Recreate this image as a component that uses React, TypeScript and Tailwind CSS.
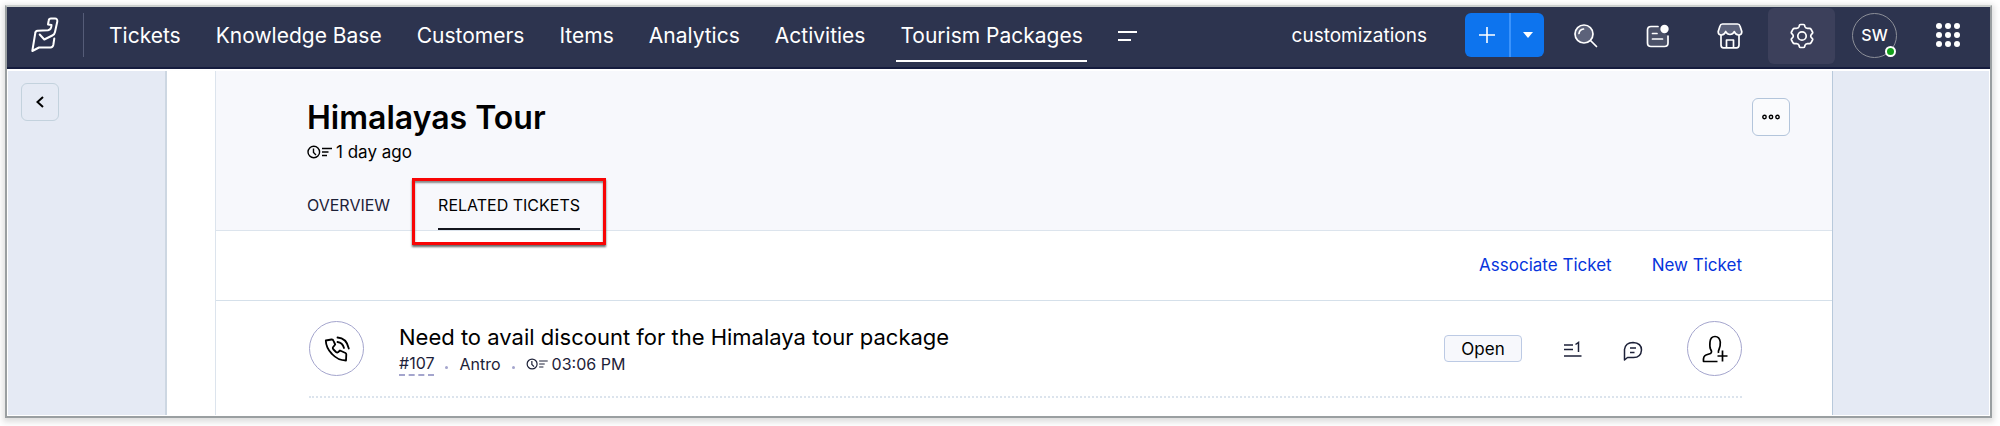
import type { ReactNode } from 'react'

interface IconProps {
  className?: string
}

const NAV_ITEMS = ['Tickets', 'Knowledge Base', 'Customers', 'Items', 'Analytics', 'Activities', 'Tourism Packages']
const ACTIVE_ITEM = 'Tourism Packages'

function Logo() {
  return (
    <svg width="28" height="36" viewBox="0 0 28 36" fill="none" stroke="#fff" strokeWidth="2" strokeLinejoin="round" strokeLinecap="round">
      <path d="M8.700 17.500 13.300 22.500 21.300 18.500Q23.600 17.500 24 15L26.300 4.500Q26.500 1.500 24 1.500H20Q18 1.500 17.700 3.500L17 7.500 20.500 8Q20.500 12.500 17 13.300L6.500 13.800Q4.500 14 4.300 16L1.300 34 8 30.500H19.500Q21.800 30.300 22.300 28L23.300 21.500" />
    </svg>
  )
}

function MenuIcon() {
  return (
    <svg width="19" height="12" viewBox="0 0 19 12" fill="#fff">
      <rect x="0" y="1" width="19" height="2" />
      <rect x="0" y="9" width="13" height="2" />
    </svg>
  )
}

function SearchIcon() {
  return (
    <svg width="24" height="24" viewBox="0 0 24 24" fill="none" stroke="#fff" strokeWidth="1.700" strokeLinecap="round">
      <circle cx="10" cy="10" r="9" fill="#5c627a" />
      <path d="M16.500 16.500 22.500 22.500M5 9.500Q5.500 5.500 9.500 5" />
    </svg>
  )
}

function NotesIcon() {
  return (
    <svg width="24" height="24" viewBox="0 0 24 24" fill="none" stroke="#fff" strokeWidth="1.700" strokeLinecap="round">
      <path d="M12 2.500H5Q1.500 2.500 1.500 6V19Q1.500 22.500 5 22.500H18.500Q22 22.500 22 19V12" fill="#4b5168" />
      <path d="M6.500 9.500H11M6.500 15H16.500" />
      <circle cx="18.500" cy="5" r="4.200" fill="#fff" stroke="none" />
    </svg>
  )
}

function StoreIcon() {
  return (
    <svg width="26" height="26" viewBox="0 0 26 26" fill="none" stroke="#fff" strokeWidth="1.700" strokeLinejoin="round">
      <path d="M5.500 1H20.500Q22.500 1 23 3L24.800 8.500Q25 12 21.500 12 18.500 12 17.300 8.500 16 11.500 13 11.500 10 11.500 8.700 8.500 7.500 12 4.500 12 1 12 1.200 8.500L3 3Q3.500 1 5.500 1Z" fill="#5c627a" />
      <path d="M4 12V22Q4 24.800 6.500 24.800H19.500Q22 24.800 22 22V12M9.500 24.500V17H16.500V24.500" />
    </svg>
  )
}

function GearIcon() {
  return (
    <svg width="24" height="26" viewBox="0 0 24 26" fill="none" stroke="#fff" strokeWidth="1.700" strokeLinejoin="round">
      <path d="M10.500 1.500H13.500Q14.500 1.500 14.700 2.500L15 3.700Q15.500 5.200 17.500 5.400H19.500Q20.500 5.400 21 6.200L22.500 9Q23 10 22.200 10.700L21.200 11.700Q20.300 13 21.200 14.300L22.200 15.300Q23 16 22.500 17L21 19.800Q20.500 20.600 19.500 20.600H17.500Q15.500 20.800 15 22.300L14.700 23.500Q14.500 24.500 13.500 24.500H10.500Q9.500 24.500 9.300 23.500L9 22.300Q8.500 20.800 6.500 20.600H4.500Q3.500 20.600 3 19.800L1.500 17Q1 16 1.800 15.300L2.800 14.300Q3.700 13 2.800 11.700L1.800 10.700Q1 10 1.500 9L3 6.200Q3.500 5.400 4.500 5.400H6.500Q8.500 5.200 9 3.700L9.300 2.500Q9.500 1.500 10.500 1.500Z" />
      <circle cx="12" cy="13" r="4.200" />
    </svg>
  )
}

function AppsIcon() {
  const steps = [3, 12, 21]
  return (
    <svg width="24" height="24" viewBox="0 0 24 24" fill="#fff">
      {steps.map((y) => steps.map((x) => <circle key={`${x}-${y}`} cx={x} cy={y} r="3" />))}
    </svg>
  )
}

function ClockLinesIcon({ className }: IconProps) {
  return (
    <svg className={className} viewBox="0 0 25 14" fill="none" stroke="currentColor" strokeWidth="1.400">
      <circle cx="6.800" cy="7" r="5.800" />
      <path d="M6.500 3.500V7.500L9 10M15 3.500H25M15 7H21.500M15 10.500H20" />
    </svg>
  )
}

function PhoneIcon() {
  return (
    <svg width="26" height="26" viewBox="0 0 26 26" fill="none" stroke="#000" strokeWidth="1.800" strokeLinejoin="round" strokeLinecap="round">
      <path d="M1.800 4.500 7.500 3.500Q9 3.300 9.500 4.800L11.200 8.500 8.800 11.500Q8.500 12.500 9.500 13.500L12 16Q13.200 17 14 16.200L16 14.500 21.500 17Q22.300 17.500 22.300 18.500L22 24.500Q14 24.500 8 18 2 12 1.800 4.500Z" />
      <path d="M13.500 1.500Q22.500 2 24.800 12.500M13.500 6Q18.500 6.500 20 12" />
    </svg>
  )
}

function PriorityIcon() {
  return (
    <svg width="18" height="16" viewBox="0 0 18 16" fill="none" stroke="#1d2138" strokeWidth="1.500">
      <path d="M0 4H9M0 8.500H9M0 15H17.500M11.500 3.500 14.500 1.500V11" />
    </svg>
  )
}

function ChatIcon() {
  return (
    <svg width="20" height="20" viewBox="0 0 20 20" fill="none" stroke="#1d2138" strokeWidth="1.500" strokeLinejoin="round">
      <path d="M1.500 19V8.500Q2.500 1.500 10 1.500 18.500 2 18.500 9 18 16.500 10.500 16.500H4.500Z" />
      <path d="M7 7H13M7 11.500H11.500" />
    </svg>
  )
}

function AssignIcon() {
  return (
    <svg width="26" height="28" viewBox="0 0 26 28" fill="none" stroke="#000" strokeWidth="1.700" strokeLinejoin="round">
      <path d="M15.500 26.500H1.500Q1 21 4 20L8.500 18.500Q10.500 17 8.500 14 7.500 12 8 7 8.500 1.500 13 1.500 17.500 1.500 18.300 7 18.500 11.500 17 14.500 16 16.500 16.500 18" />
      <path d="M20.500 15.500V26.500M15.500 21H25.500" />
    </svg>
  )
}

function IconButton({ label, children }: { label: string; children: ReactNode }) {
  return (
    <button type="button" aria-label={label} className="flex h-14 w-[67px] items-center justify-center rounded-md">
      {children}
    </button>
  )
}

function TopBar() {
  return (
    <header className="flex h-[62px] items-center border-b-2 border-[#151c3e] bg-[#2d344f] pb-1 text-white">
      <a href="#" aria-label="Home" className="flex h-11 w-[77px] items-center justify-center border-r border-[#555c78]">
        <Logo />
      </a>
      <nav className="ml-[25px] flex items-center gap-[35px] self-stretch pt-[2px] text-[21px]">
        {NAV_ITEMS.map((item) =>
          item === ACTIVE_ITEM ? (
            <a key={item} href="#" aria-current="page" className="relative flex items-center self-stretch whitespace-nowrap">
              {item}
              <span className="absolute -inset-x-1 bottom-px h-[2px] bg-white" />
            </a>
          ) : (
            <a key={item} href="#" className="whitespace-nowrap">{item}</a>
          )
        )}
        <button type="button" aria-label="More modules">
          <MenuIcon />
        </button>
      </nav>

      <div className="ml-auto flex items-center pr-[30px]">
        <a href="#" className="mr-[38px] pt-[2px] text-[19px]">customizations</a>
        <div className="mr-2 flex h-11 w-[79px] overflow-hidden rounded-md bg-[#0d74ee]">
          <button type="button" aria-label="Add" className="flex w-[46px] items-center justify-center border-r-2 border-[#3b93fb]">
            <svg width="16" height="16" viewBox="0 0 16 16" stroke="#fff" strokeWidth="1.600">
              <path d="M8 0V16M0 8H16" />
            </svg>
          </button>
          <button type="button" aria-label="Add options" className="flex flex-1 items-center justify-center">
            <svg width="10" height="6" viewBox="0 0 10 6" fill="#fff">
              <path d="M0 0H10L5 6Z" />
            </svg>
          </button>
        </div>
        <div className="flex items-center gap-[5px] pt-[2px]">
          <IconButton label="Search"><SearchIcon /></IconButton>
          <IconButton label="Notes"><NotesIcon /></IconButton>
          <IconButton label="Marketplace"><StoreIcon /></IconButton>
          <button type="button" aria-label="Setup" className="flex h-14 w-[67px] items-center justify-center rounded-md bg-[#3c405b]">
            <GearIcon />
          </button>
        </div>
        <button type="button" className="relative ml-[17px] flex size-[45px] items-center justify-center rounded-full border border-[#8c8f98] text-base font-medium">
          SW
          <span className="absolute right-0 bottom-0 size-[11px] rounded-full border-2 border-white bg-[#14a01c]" />
        </button>
        <button type="button" aria-label="Apps" className="ml-[39px]">
          <AppsIcon />
        </button>
      </div>
    </header>
  )
}

function RecordHeader() {
  return (
    <section className="flex items-start justify-between border-b border-[#dce4ed] bg-[#f7f8fc] pr-[42px] pl-[91px]">
      <div>
        <h1 className="mt-[27px] text-[32px] leading-10 font-semibold">Himalayas Tour</h1>
        <p className="flex items-center gap-1 text-[17px] leading-7">
          <ClockLinesIcon className="h-[14px] w-[25px]" />
          1 day ago
        </p>
        <div className="mt-4 flex h-12 gap-12 text-base">
          <a href="#" className="flex items-center pb-[2px] text-[#1d2138]">OVERVIEW</a>
          <a href="#" aria-current="page" className="relative flex items-center border-b-2 border-[#14161f]">
            RELATED TICKETS
            <span className="absolute -inset-x-[26px] -top-[4px] -bottom-[17px] border-3 border-[#f80505] shadow-[0_2px_2px_#666,inset_0_2px_2px_#888]" />
          </a>
        </div>
      </div>
      <button type="button" aria-label="More actions" className="mt-[27px] flex size-[38px] items-center justify-center rounded-md border border-[#b3c5db] bg-[#fafbfd]">
        <svg width="18" height="6" viewBox="0 0 18 6" fill="none" stroke="#000" strokeWidth="1.400">
          <circle cx="2.500" cy="3" r="1.700" />
          <circle cx="9" cy="3" r="1.700" />
          <circle cx="15.500" cy="3" r="1.700" />
        </svg>
      </button>
    </section>
  )
}

function TicketRow() {
  return (
    <article className="flex items-center border-b-2 border-dotted border-[#dce4ed] py-5">
      <div className="flex size-[55px] shrink-0 items-center justify-center rounded-full border border-[#a4a5cd]">
        <PhoneIcon />
      </div>
      <div className="ml-[35px]">
        <h2 className="text-[22px] leading-[30px]">Need to avail discount for the Himalaya tour package</h2>
        <div className="flex items-center text-base leading-[22px] text-[#1d2138]">
          <a href="#" className="border-b-2 border-dashed border-[#a4a5cd]">#107</a>
          <span className="mx-[11px] mt-2 size-[3px] rounded-full bg-[#a4a5cd]" />
          <span>Antro</span>
          <span className="mx-[11px] mt-2 size-[3px] rounded-full bg-[#a4a5cd]" />
          <ClockLinesIcon className="mr-1 h-3 w-[22px]" />
          <time>03:06 PM</time>
        </div>
      </div>
      <button type="button" className="ml-auto h-[27px] w-[78px] rounded-sm border border-[#bccae4] bg-[#f7f8fc] text-[17px] leading-6">
        Open
      </button>
      <button type="button" aria-label="Priority" className="ml-[42px]"><PriorityIcon /></button>
      <button type="button" aria-label="Comments" className="ml-[41px] pt-1"><ChatIcon /></button>
      <button type="button" aria-label="Assign" className="ml-11 flex size-[55px] items-center justify-center rounded-full border border-[#a4a5cd]">
        <AssignIcon />
      </button>
    </article>
  )
}

export default function App() {
  return (
    <div className="bg-white pt-[5px] pr-[8px] pb-[8px] pl-[5px] font-['Inter',sans-serif] text-black">
      <div className="border-2 border-[#9a9fa1] border-t-[#ccd0ce] shadow-[0_2px_6px_2px_#ddd]">
        <TopBar />
        <div className="flex border border-t-2 border-white">
          <aside className="w-[159px] shrink-0 border-r-2 border-[#cdd7e2] bg-[#e5eaf4] px-[13px] py-3">
            <button type="button" aria-label="Back" className="flex size-[38px] items-center justify-center rounded-md border border-[#c3d2dd]">
              <svg width="8" height="12" viewBox="0 0 8 12" fill="none" stroke="#000" strokeWidth="2">
                <path d="M7 1 1.500 6 7 11" />
              </svg>
            </button>
          </aside>
          <main className="ml-12 flex-1 border-x border-l-[#dce4ed] border-r-[#b8c9db]">
            <RecordHeader />
            <div className="flex h-[70px] items-center justify-end gap-10 border-b border-[#d5e0ea] pr-[90px] text-[17px] text-[#0634dc]">
              <a href="#">Associate Ticket</a>
              <a href="#">New Ticket</a>
            </div>
            <div className="pr-[90px] pb-[17px] pl-[93px]">
              <TicketRow />
            </div>
          </main>
          <aside className="w-[156px] shrink-0 bg-[#e5eaf4]" />
        </div>
      </div>
    </div>
  )
}
